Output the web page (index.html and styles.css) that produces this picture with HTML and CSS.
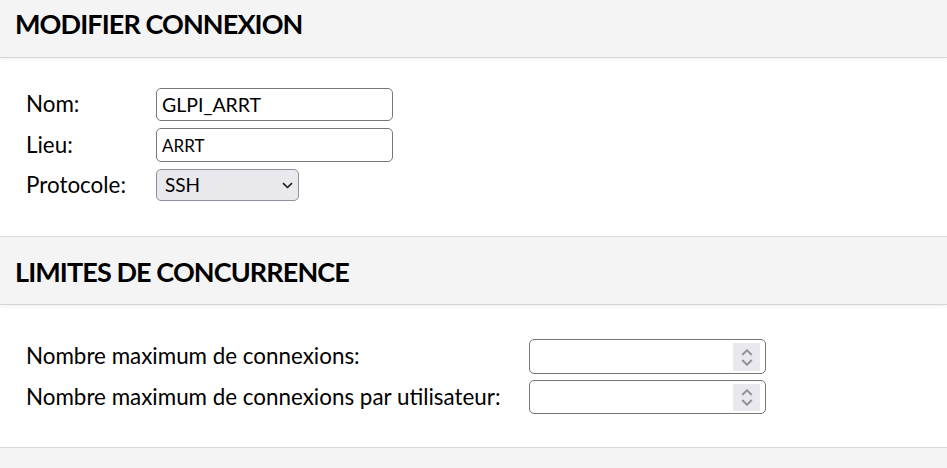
FILE: index.html
```html
<!DOCTYPE html>
<html lang="fr">
<head>
<meta charset="utf-8">
<title>Modifier connexion</title>
<link rel="stylesheet" href="styles.css">
</head>
<body>
<div class="page">
  <h2 class="section-title section-title--first">MODIFIER CONNEXION</h2>
  <div class="section-body">
    <div class="form-grid form-grid--main">
      <label class="field-label" for="nom">Nom:</label>
      <input class="text-input text-input--large" id="nom" type="text" value="GLPI_ARRT">
      <label class="field-label" for="lieu">Lieu:</label>
      <input class="text-input text-input--tall" id="lieu" type="text" value="ARRT">
      <label class="field-label" for="proto">Protocole:</label>
      <div class="select-box" id="proto">
        <span class="select-value">SSH</span>
        <svg class="select-chevron" width="11" height="7" viewBox="0 0 11 7"><path d="M1 1.2 L5.5 5.5 L10 1.2" fill="none" stroke="#1b1b1b" stroke-width="1.6"/></svg>
      </div>
    </div>
  </div>
  <h2 class="section-title">LIMITES DE CONCURRENCE</h2>
  <div class="section-body section-body--limits">
    <div class="form-grid form-grid--limits">
      <label class="field-label" for="max">Nombre maximum de connexions:</label>
      <div class="number-box">
        <input class="number-field" id="max" type="text" value="">
        <span class="spinner"><svg width="12" height="17" viewBox="0 0 12 17"><path d="M1.2 6 L6 1.3 L10.8 6" fill="none" stroke="#92929f" stroke-width="2"/><path d="M1.2 11 L6 15.7 L10.8 11" fill="none" stroke="#92929f" stroke-width="2"/></svg></span>
      </div>
      <label class="field-label" for="maxu">Nombre maximum de connexions par utilisateur:</label>
      <div class="number-box number-box--second">
        <input class="number-field" id="maxu" type="text" value="">
        <span class="spinner"><svg width="12" height="17" viewBox="0 0 12 17"><path d="M1.2 6 L6 1.3 L10.8 6" fill="none" stroke="#92929f" stroke-width="2"/><path d="M1.2 11 L6 15.7 L10.8 11" fill="none" stroke="#92929f" stroke-width="2"/></svg></span>
      </div>
    </div>
  </div>
  <div class="footer-band"></div>
</div>
</body>
</html>
```
FILE: styles.css
```css
* { box-sizing: border-box; }
html, body { margin: 0; padding: 0; background: #fff; }
body {
  font-family: Lato, "Liberation Sans", sans-serif;
  color: #000;
  width: 947px;
  height: 468px;
  overflow: hidden;
}
.page { display: flex; flex-direction: column; }

.section-title {
  margin: 0;
  background: #f4f4f4;
  font-size: 27px;
  letter-spacing: -0.9px;
  line-height: 34px;
  font-weight: 700;
  padding: 18px 15px 15px;
  border-top: 1px solid #dcdcdc;
  border-bottom: 1px solid #d6d6d6;
  box-shadow: 0 2px 4px rgba(0,0,0,0.06);
  position: relative;
  z-index: 1;
}
.section-title--first {
  border-top: none;
  padding: 7px 15px 16px;
}

.section-body { padding: 30px 26px 35px; }
.section-body--limits { padding: 34px 26px 33px; }

.form-grid {
  display: grid;
  align-items: center;
}
.form-grid--main {
  grid-template-columns: 130px 237px;
  row-gap: 7px;
}
.form-grid--limits {
  grid-template-columns: 503px 237px;
  row-gap: 6px;
}

.field-label {
  font-size: 22.4px;
  line-height: 27px;
  margin-top: -2px;
}

.text-input {
  height: 33px;
  width: 237px;
  border: 1px solid #767676;
  border-radius: 5px;
  padding: 0 5px;
  font-family: Lato, "Liberation Sans", sans-serif;
  font-size: 17px;
  color: #000;
  background: #fff;
}
.text-input--large { font-size: 19.5px; }
.text-input--tall { height: 34px; }

.select-box {
  display: flex;
  align-items: center;
  justify-content: space-between;
  width: 143px;
  height: 32px;
  border: 1px solid #8f8f9d;
  border-radius: 5px;
  background: #e9e9ed;
  padding: 0 5px 0 8px;
}
.select-value {
  font-size: 19px;
  line-height: 22px;
}
.select-chevron { display: block; margin-top: 1px; }

.number-box {
  display: flex;
  align-items: stretch;
  width: 237px;
  height: 35px;
  border: 1px solid #767676;
  border-radius: 5px;
  background: #fff;
  padding: 3px 5px 2px 4px;
}
.number-box--second { height: 34px; }
.number-field {
  flex: 1;
  min-width: 0;
  border: none;
  outline: none;
  background: transparent;
  font-family: Lato, sans-serif;
  font-size: 18px;
}
.spinner {
  width: 27px;
  background: #e9e9ed;
  display: flex;
  align-items: center;
  justify-content: center;
}
.spinner svg { display: block; }

.footer-band {
  height: 40px;
  background: #f4f4f4;
  border-top: 1px solid #d8d8d8;
}
```
